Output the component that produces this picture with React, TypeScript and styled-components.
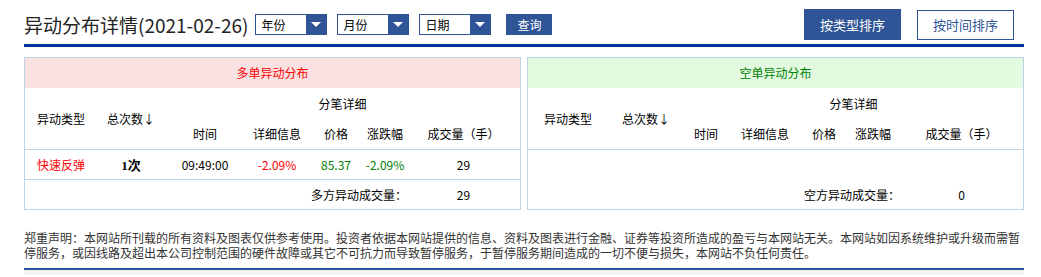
import styled, { createGlobalStyle } from "styled-components";

const GlobalStyle = createGlobalStyle`
	body {
		margin: 0;
		background: #fff;
		color: #000;
		font-family: "Noto Sans CJK SC", "Liberation Sans", sans-serif;
	}
`;

const Page = styled.div`
	width: 1000px;
	margin-left: 24px;
`;

const Header = styled.div`
	display: flex;
	align-items: center;
	height: 39px;
	padding: 5px 10px 0 0;
	border-bottom: 3px solid #003399;
`;

const Title = styled.h1`
	margin: 0 7px 0 0;
	font-size: 19px;
	font-weight: normal;
	line-height: 1;
	color: #222;
`;

const Select = styled.div`
	display: flex;
	box-sizing: border-box;
	width: 72px;
	height: 21px;
	margin-right: 10px;
	border: 1px solid #2f5597;
	background: #fff;
`;

const SelectLabel = styled.span`
	flex: 1;
	padding-left: 5px;
	font-size: 12px;
	line-height: 19px;
`;

const SelectArrow = styled.span`
	display: flex;
	align-items: center;
	justify-content: center;
	width: 20px;
	background: #2f5597;

	&::after {
		content: "";
		border-left: 5px solid transparent;
		border-right: 5px solid transparent;
		border-top: 5px solid #fff;
	}
`;

const QueryButton = styled.button`
	width: 46px;
	height: 21px;
	margin-left: 5px;
	padding: 0;
	border: none;
	background: #2f5597;
	color: #fff;
	font-family: inherit;
	font-size: 12px;
`;

const Spacer = styled.div`
	flex: 1;
`;

const SortButton = styled.button<{ $active?: boolean }>`
	box-sizing: border-box;
	width: 97px;
	height: ${(p) => (p.$active ? "31px" : "30px")};
	margin-left: 16px;
	padding: 0;
	border: 1px solid #2f5597;
	background: ${(p) => (p.$active ? "#2f5597" : "#fff")};
	color: ${(p) => (p.$active ? "#fff" : "#2f5597")};
	font-family: inherit;
	font-size: 13px;
`;

const Panels = styled.div`
	display: flex;
	gap: 6px;
	margin-top: 10px;
`;

const Panel = styled.div`
	box-sizing: border-box;
	width: 497px;
	border: 1px solid #bcd4e8;
`;

const PanelTitle = styled.div<{ $bg: string; $color: string }>`
	height: 30px;
	line-height: 30px;
	text-align: center;
	font-size: 12px;
	background: ${(p) => p.$bg};
	color: ${(p) => p.$color};
`;

const Table = styled.table`
	width: 100%;
	border-collapse: collapse;
	table-layout: fixed;
	font-size: 12px;

	th {
		font-weight: normal;
		text-align: center;
		padding: 0;
	}

	td {
		text-align: center;
		padding: 0;
	}
`;

const HeadRow = styled.tr<{ $h: number }>`
	height: ${(p) => p.$h}px;
`;

const GroupHead = styled.th`
	vertical-align: middle;
`;

const BodyRow = styled.tr<{ $ruled?: boolean }>`
	height: 30px;
	border-top: 1px solid #bcd4e8;
	border-bottom: ${(p) => (p.$ruled ? "1px solid #bcd4e8" : "none")};
`;

const Cell = styled.td<{ $color?: string }>`
	color: ${(p) => p.$color || "#000"};
`;

const Count = styled.td`
	font-family: "Liberation Serif", "Noto Sans CJK SC", serif;
	font-weight: bold;
	font-size: 13px;
`;

const SumLabel = styled.td`
	text-align: right !important;
`;

const Notice = styled.div`
	margin-top: 20px;
	font-size: 12px;
	color: #333;
	white-space: nowrap;
`;

const NoticeLine = styled.p`
	margin: 0;
	height: 15px;
	line-height: 15px;
`;

const BottomRule = styled.div`
	margin-top: 8px;
	height: 5px;
	border-top: 2px solid #2d5597;
	background: #f2f2f2;
`;

type Trade = {
	type: string;
	count: string;
	time: string;
	info: string;
	price: string;
	change: string;
	volume: string;
};

type Side = {
	title: string;
	bg: string;
	color: string;
	cols: number[];
	sumLabel: string;
	sum: string;
	rows: Trade[];
};

const sides: Side[] = [
	{
		title: "多单异动分布",
		bg: "#f9e0e1",
		color: "#ff0000",
		cols: [72, 68, 80, 64, 54, 44, 113],
		sumLabel: "多方异动成交量：",
		sum: "29",
		rows: [
			{
				type: "快速反弹",
				count: "1次",
				time: "09:49:00",
				info: "-2.09%",
				price: "85.37",
				change: "-2.09%",
				volume: "29",
			},
		],
	},
	{
		title: "空单异动分布",
		bg: "#e1fae0",
		color: "#008000",
		cols: [80, 76, 44, 74, 44, 54, 123],
		sumLabel: "空方异动成交量：",
		sum: "0",
		rows: [],
	},
];

const notice = [
	"郑重声明：本网站所刊载的所有资料及图表仅供参考使用。投资者依据本网站提供的信息、资料及图表进行金融、证券等投资所造成的盈亏与本网站无关。本网站如因系统维护或升级而需暂",
	"停服务，或因线路及超出本公司控制范围的硬件故障或其它不可抗力而导致暂停服务，于暂停服务期间造成的一切不便与损失，本网站不负任何责任。",
];

function SidePanel({ side }: { side: Side }) {
	return (
		<Panel>
			<PanelTitle $bg={side.bg} $color={side.color}>
				{side.title}
			</PanelTitle>
			<Table>
				<colgroup>
					{side.cols.map((w, i) => (
						<col key={i} style={{ width: w }} />
					))}
				</colgroup>
				<thead>
					<HeadRow $h={30}>
						<GroupHead rowSpan={2}>异动类型</GroupHead>
						<GroupHead rowSpan={2}>总次数↓</GroupHead>
						<th colSpan={5}>分笔详细</th>
					</HeadRow>
					<HeadRow $h={31}>
						<th>时间</th>
						<th>详细信息</th>
						<th>价格</th>
						<th>涨跌幅</th>
						<th>成交量（手）</th>
					</HeadRow>
				</thead>
				<tbody>
					{side.rows.length ? (
						side.rows.map((r, i) => (
							<BodyRow key={i} $ruled>
								<Cell $color="#ff0000">{r.type}</Cell>
								<Count>{r.count}</Count>
								<Cell>{r.time}</Cell>
								<Cell $color="#ff0000">{r.info}</Cell>
								<Cell $color="#008000">{r.price}</Cell>
								<Cell $color="#008000">{r.change}</Cell>
								<Cell>{r.volume}</Cell>
							</BodyRow>
						))
					) : (
						<BodyRow>
							<td colSpan={7} />
						</BodyRow>
					)}
					<HeadRow $h={30}>
						<SumLabel colSpan={6}>{side.sumLabel}</SumLabel>
						<Cell>{side.sum}</Cell>
					</HeadRow>
				</tbody>
			</Table>
		</Panel>
	);
}

export default function App() {
	return (
		<>
			<GlobalStyle />
			<Page>
				<Header>
					<Title>异动分布详情(2021-02-26)</Title>
					{["年份", "月份", "日期"].map((label) => (
						<Select key={label}>
							<SelectLabel>{label}</SelectLabel>
							<SelectArrow />
						</Select>
					))}
					<QueryButton>查询</QueryButton>
					<Spacer />
					<SortButton $active>按类型排序</SortButton>
					<SortButton>按时间排序</SortButton>
				</Header>
				<Panels>
					{sides.map((s) => (
						<SidePanel key={s.title} side={s} />
					))}
				</Panels>
				<Notice>
					{notice.map((line) => (
						<NoticeLine key={line}>{line}</NoticeLine>
					))}
				</Notice>
				<BottomRule />
			</Page>
		</>
	);
}
